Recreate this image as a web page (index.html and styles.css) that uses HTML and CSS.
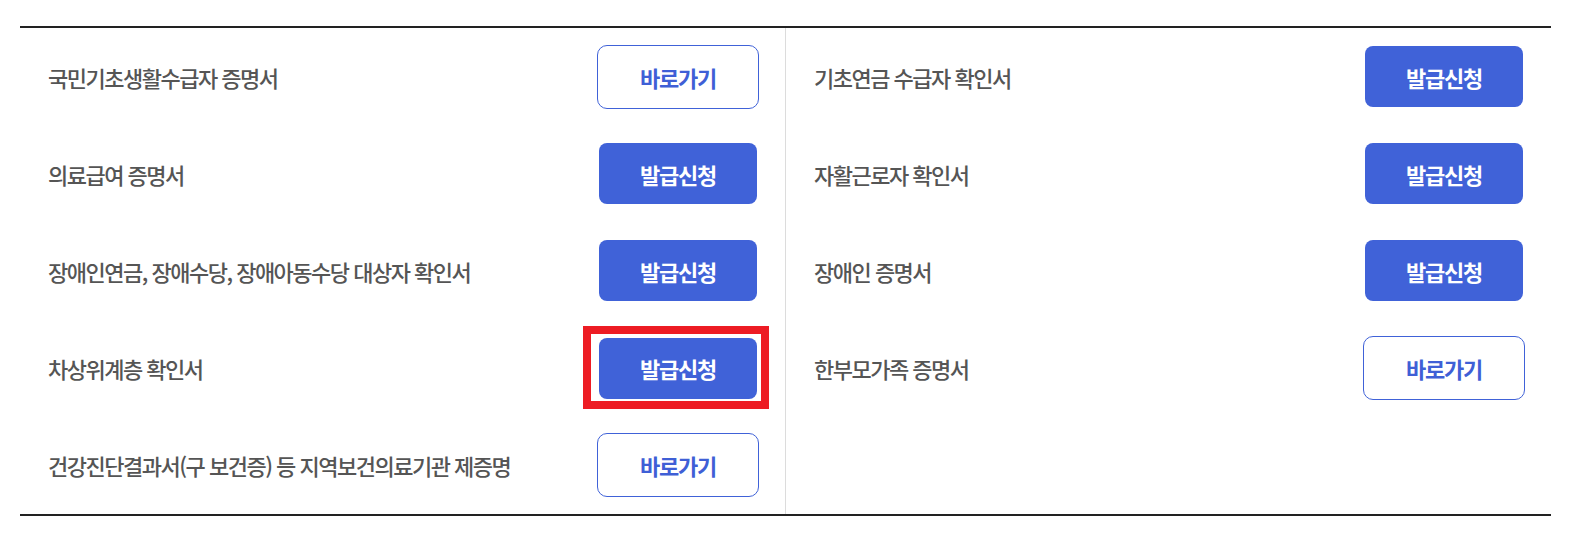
FILE: index.html
```html
<!DOCTYPE html>
<html lang="ko">
<head>
<meta charset="utf-8">
<title>증명서 발급</title>
<link rel="stylesheet" href="styles.css">
</head>
<body>
<div class="board">
  <ul class="col col-left">
    <li class="row"><span class="label">국민기초생활수급자 증명서</span><span class="btn-box"><a class="btn btn-line" href="#">바로가기</a></span></li>
    <li class="row"><span class="label">의료급여 증명서</span><span class="btn-box"><a class="btn btn-fill" href="#">발급신청</a></span></li>
    <li class="row"><span class="label">장애인연금, 장애수당, 장애아동수당 대상자 확인서</span><span class="btn-box"><a class="btn btn-fill" href="#">발급신청</a></span></li>
    <li class="row"><span class="label">차상위계층 확인서</span><span class="btn-box marked"><a class="btn btn-fill" href="#">발급신청</a><span class="mark"></span></span></li>
    <li class="row"><span class="label">건강진단결과서(구 보건증) 등 지역보건의료기관 제증명</span><span class="btn-box"><a class="btn btn-line" href="#">바로가기</a></span></li>
  </ul>
  <ul class="col col-right">
    <li class="row"><span class="label">기초연금 수급자 확인서</span><span class="btn-box"><a class="btn btn-fill" href="#">발급신청</a></span></li>
    <li class="row"><span class="label">자활근로자 확인서</span><span class="btn-box"><a class="btn btn-fill" href="#">발급신청</a></span></li>
    <li class="row"><span class="label">장애인 증명서</span><span class="btn-box"><a class="btn btn-fill" href="#">발급신청</a></span></li>
    <li class="row"><span class="label">한부모가족 증명서</span><span class="btn-box"><a class="btn btn-line" href="#">바로가기</a></span></li>
  </ul>
</div>
</body>
</html>
```
FILE: styles.css
```css
html, body {
  margin: 0;
  padding: 0;
  background: #fff;
}
body {
  font-family: "Noto Sans CJK KR", "Noto Sans", sans-serif;
  padding-top: 26px;
}
.board {
  margin-left: 20px;
  width: 1531px;
  display: grid;
  grid-template-columns: 766px 765px;
  border-top: 2px solid #222;
  border-bottom: 2px solid #222;
  height: 486px;
}
.col {
  list-style: none;
  margin: 0;
  padding: 0;
}
.col-left {
  border-right: 1px solid #dcdcdc;
}
.row {
  height: 97.2px;
  display: flex;
  align-items: center;
  justify-content: space-between;
  padding: 0 26px 0 28px;
}
.label {
  font-size: 22px;
  font-weight: 500;
  letter-spacing: -1.5px;
  color: #555;
  line-height: 1;
}
.btn-box {
  position: relative;
  width: 162px;
  height: 64px;
  display: flex;
  align-items: center;
  justify-content: center;
}
.btn {
  display: flex;
  align-items: center;
  justify-content: center;
  box-sizing: border-box;
  text-decoration: none;
  font-size: 22px;
  font-weight: 700;
  letter-spacing: -1.3px;
  line-height: 1;
}
.btn-line {
  width: 162px;
  height: 64px;
  border: 1px solid #4062d8;
  border-radius: 10px;
  color: #3f5fd6;
  background: #fff;
}
.btn-fill {
  width: 158px;
  height: 61px;
  border-radius: 8px;
  background: #4062d8;
  color: #fff;
}
.mark {
  position: absolute;
  left: -14px;
  right: -10px;
  top: -10px;
  bottom: -9px;
  border: 8px solid #ed1c24;
  pointer-events: none;
}
```
